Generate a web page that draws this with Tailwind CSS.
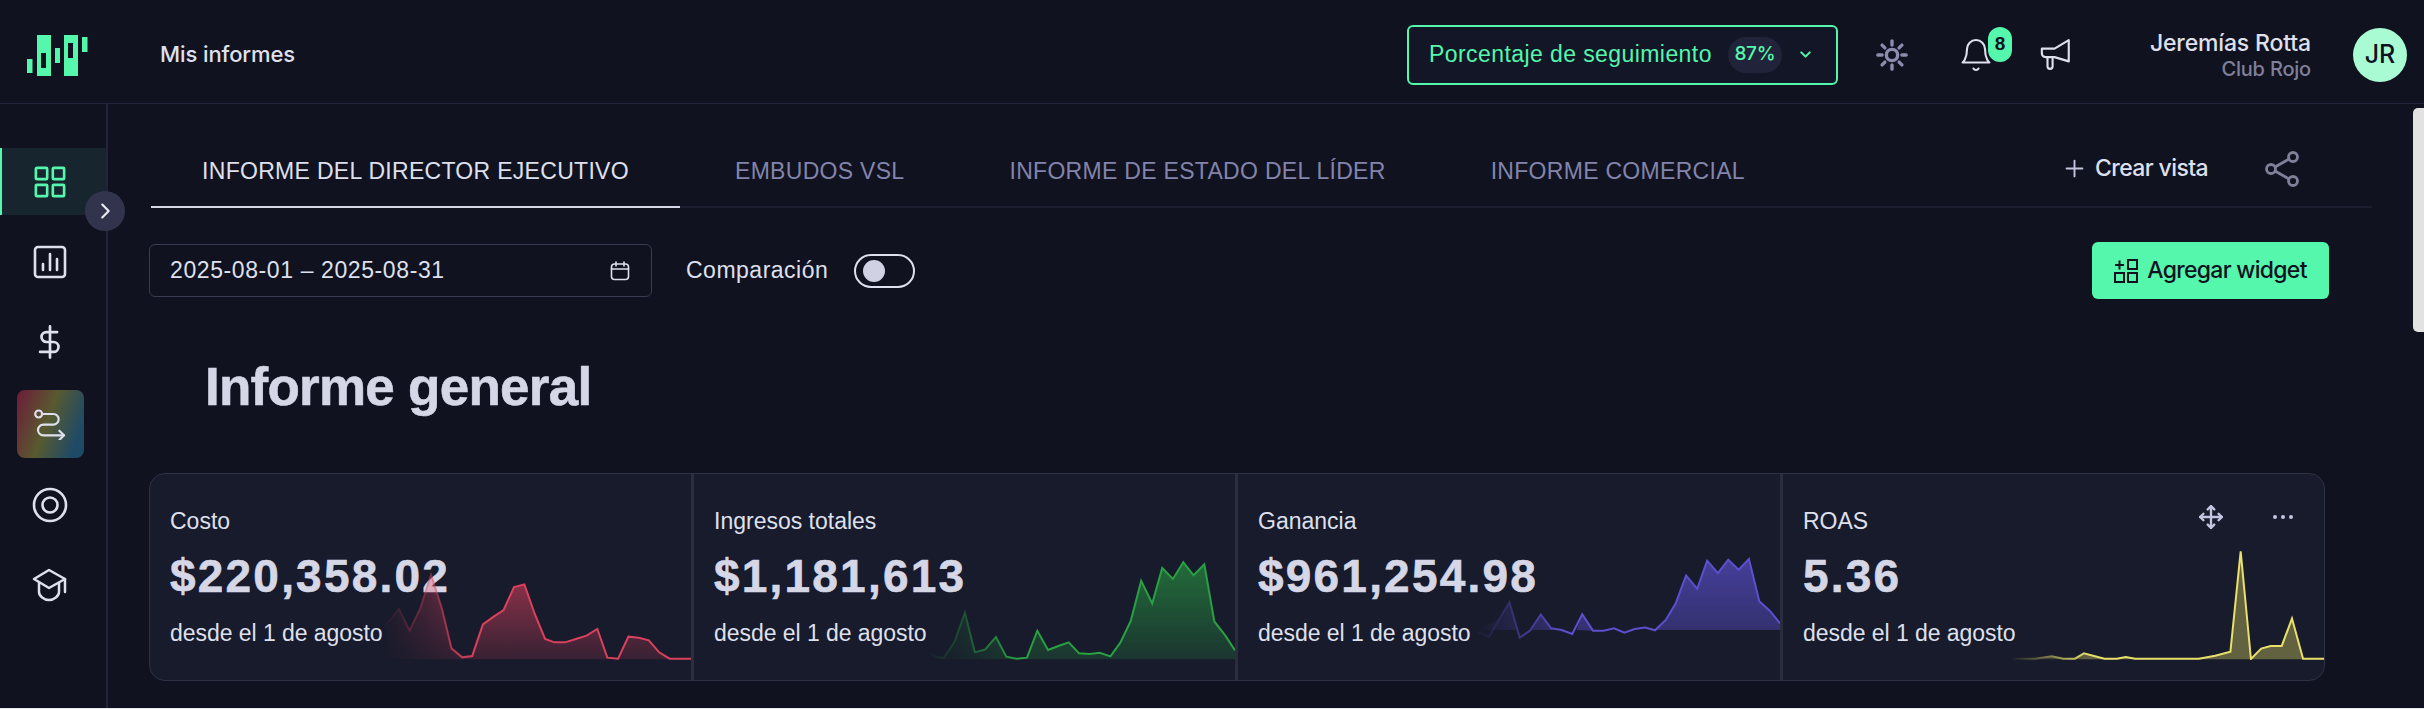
<!DOCTYPE html>
<html lang="es">

<head>
    <meta charset="UTF-8">
    <title>Mis informes</title>
    <script src="https://cdn.jsdelivr.net/npm/@tailwindcss/browser@4"></script>
</head>

<body class="w-[2424px] h-[709px] overflow-hidden relative bg-[#10121f] text-[#dfe0ee] font-['Liberation_Sans',Arial,sans-serif]">

    <!-- Top bar -->
    <header class="h-[104px] flex items-center border-b border-[#22243a] pl-[27px] pt-[6px]">
        <svg width="61" height="42" viewBox="0 0 61 42" fill="#54f7ac" class="shrink-0">
            <rect x="0" y="25" width="5.5" height="14" />
            <path fill-rule="evenodd" d="M10 1h14v41H10zM14 19v15h5V19z" />
            <rect x="28" y="14" width="5" height="15" />
            <path fill-rule="evenodd" d="M37 1h14v41H37zM41 9v15h5V9z" />
            <rect x="55" y="3" width="5.5" height="15" />
        </svg>
        <span class="ml-[72px] text-[22px] font-['Inter'] font-medium tracking-[-0.1px]">Mis informes</span>

        <div class="ml-auto flex items-center">
            <!-- Tracking chip -->
            <div class="w-[431px] h-[60px] flex items-center pl-[20px] border-2 border-[#54f7ac] rounded-[6px] bg-[#131626] text-[#54f7ac]">
                <span class="text-[23px] tracking-[0.42px] whitespace-nowrap">Porcentaje de seguimiento</span>
                <span class="ml-[16px] w-[54px] h-[36px] rounded-full bg-[#21233a] flex items-center justify-center text-[19px] font-['Inter'] font-medium tracking-[-0.3px]">87%</span>
                <svg class="ml-[15px]" width="17" height="17" viewBox="0 0 24 24" fill="none" stroke="currentColor" stroke-width="2.8" stroke-linecap="round" stroke-linejoin="round"><path d="m6 9 6 6 6-6" /></svg>
            </div>

            <!-- Theme -->
            <svg class="ml-[37px]" width="34" height="34" viewBox="0 0 24 24" fill="none" stroke="#8b8cae" stroke-width="2.4" stroke-linecap="round">
                <circle cx="12" cy="12" r="4" />
                <path d="M12 2v3M12 19v3M2 12h3M19 12h3M5 5l2 2M17 17l2 2M5 19l2-2M17 7l2-2" />
            </svg>

            <!-- Notifications -->
            <div class="relative ml-[47px] w-[40px] h-[36px] flex items-center justify-center">
                <svg width="36" height="36" viewBox="0 0 24 24" fill="none" stroke="#dfe0ee" stroke-width="1.4" stroke-linecap="round" stroke-linejoin="round">
                    <path d="M6 8a6 6 0 0 1 12 0c0 7 3 9 3 9H3s3-2 3-9" />
                    <path d="M10.3 21a1.94 1.94 0 0 0 3.4 0" />
                </svg>
                <span class="absolute left-[32px] top-[-10px] w-[24px] h-[35px] rounded-full bg-[#54f7ac] text-[#10121f] text-[19px] font-bold flex items-center justify-center">8</span>
            </div>

            <!-- Announcements -->
            <svg class="ml-[43px]" width="34" height="36" viewBox="0 0 24 24" fill="none" stroke="#dfe0ee" stroke-width="1.5" stroke-linecap="round" stroke-linejoin="round">
                <path d="M2 7.5h9L21 1.5v15l-10-3H4.5A2.5 2.5 0 0 1 2 11z" />
                <path d="M6 13.5v6.5a1.8 1.8 0 0 0 3.6 0v-6.5" />
            </svg>

            <!-- User -->
            <div class="ml-[76px] w-[162px] flex flex-col items-end">
                <span class="text-[23px] leading-[28px] font-['Inter'] font-medium tracking-[-0.15px] whitespace-nowrap">Jeremías Rotta</span>
                <span class="text-[20px] leading-[24px] text-[#7f8099] font-['Inter'] font-medium tracking-[-0.2px]">Club Rojo</span>
            </div>
            <div class="ml-[42px] mr-[17px] w-[54px] h-[54px] rounded-full bg-[#a8fbd3] text-[#10121f] text-[25px] font-['Inter'] font-medium flex items-center justify-center">JR</div>
        </div>
    </header>

    <div class="flex h-[605px]">
        <!-- Side navigation -->
        <aside class="relative w-[108px] shrink-0 border-r-2 border-[#22243a] pt-[44px] flex flex-col items-center text-[#dfe0ee]">
            <div class="w-full h-[67px] border-l-2 border-[#54f7ac] bg-[#16252e] flex items-center justify-center pr-[9px]">
                <svg width="32" height="32" viewBox="0 0 34 34" fill="none" stroke="#54f7ac" stroke-width="2.8">
                    <rect x="2" y="2" width="12" height="12" rx="1" />
                    <rect x="20" y="2" width="12" height="12" rx="1" />
                    <rect x="2" y="20" width="12" height="12" rx="1" />
                    <rect x="20" y="20" width="12" height="12" rx="1" />
                </svg>
            </div>
            <div class="h-[80px] mt-[7px] w-full flex items-center justify-center pr-[7px]">
                <svg width="34" height="34" viewBox="0 0 34 34" fill="none" stroke="currentColor" stroke-width="2.6" stroke-linecap="round">
                    <rect x="2" y="2" width="30" height="30" rx="3" />
                    <path d="M10 19v6M17 9v16M24 14v11" />
                </svg>
            </div>
            <div class="h-[80px] w-full flex items-center justify-center pr-[7px]">
                <svg width="34" height="34" viewBox="0 0 24 24" fill="none" stroke="currentColor" stroke-width="1.9" stroke-linecap="round" stroke-linejoin="round">
                    <path d="M12 1v22" />
                    <path d="M17 5H9.5a3.5 3.5 0 0 0 0 7h5a3.5 3.5 0 0 1 0 7H5" />
                </svg>
            </div>
            <div class="h-[68px] w-[67px] mt-[8px] mr-[6px] rounded-[8px] bg-[linear-gradient(110deg,#6b2238_5%,#585a2f_45%,#1f4a66_85%)] flex items-center justify-center">
                <svg width="32" height="32" viewBox="0 0 24 24" fill="none" stroke="currentColor" stroke-width="1.6" stroke-linecap="round" stroke-linejoin="round">
                    <circle cx="3.5" cy="4.5" r="2.6" />
                    <path d="M6 4.5h8.5a4 4 0 0 1 0 8H7a4 4 0 0 0 0 8h15.5" />
                    <path d="m19 17 3.5 3.5L19 24" />
                </svg>
            </div>
            <div class="h-[80px] mt-[7px] w-full flex items-center justify-center pr-[7px]">
                <svg width="36" height="36" viewBox="0 0 36 36" fill="none" stroke="currentColor" stroke-width="2.6">
                    <circle cx="18" cy="18" r="16" />
                    <circle cx="18" cy="18" r="7.5" />
                </svg>
            </div>
            <div class="h-[80px] w-full flex items-center justify-center pr-[7px]">
                <svg width="36" height="34" viewBox="0 0 36 34" fill="none" stroke="currentColor" stroke-width="2.5" stroke-linecap="round" stroke-linejoin="round">
                    <path d="M17 2 2 11l15 9 16-9z" />
                    <path d="M7 15v9c0 4 5 8 10 8s10-4 10-8v-9" />
                    <path d="M33 11v13" />
                </svg>
            </div>
            <button class="absolute left-[85px] top-[87px] w-[40px] h-[40px] rounded-full bg-[#32344e] flex items-center justify-center">
                <svg width="22" height="22" viewBox="0 0 24 24" fill="none" stroke="#e8e9f2" stroke-width="2.4" stroke-linecap="round" stroke-linejoin="round"><path d="m9 5 7 7-7 7" /></svg>
            </button>
        </aside>

        <main class="flex-1 min-w-0">
            <!-- Tabs -->
            <div class="ml-[43px] mr-[52px] pt-[33px] flex items-center border-b-2 border-[#1d1f30] text-[23px] tracking-[0.3px]">
                <button class="h-[71px] w-[529px] -mb-[2px] border-b-2 border-[#d5d7e6] text-[#dfe0ee] whitespace-nowrap">INFORME DEL DIRECTOR EJECUTIVO</button>
                <span class="ml-[55px] text-[#8284ab] whitespace-nowrap">EMBUDOS VSL</span>
                <span class="ml-[105px] text-[#8284ab] whitespace-nowrap">INFORME DE ESTADO DEL LÍDER</span>
                <span class="ml-[105px] text-[#8284ab] whitespace-nowrap">INFORME COMERCIAL</span>
                <div class="ml-auto flex items-center -mt-[6px] mr-[72px]">
                    <svg width="19" height="19" viewBox="0 0 18 18" fill="none" stroke="#c3c5e0" stroke-width="1.8" stroke-linecap="round"><path d="M9 1.5v15M1.5 9h15" /></svg>
                    <span class="ml-[11px] text-[23px] font-['Inter'] font-medium tracking-[-0.6px]">Crear vista</span>
                    <svg class="ml-[56px]" width="36" height="36" viewBox="0 0 36 36" fill="none" stroke="#7f8099" stroke-width="2.8">
                        <circle cx="7" cy="18" r="4.5" />
                        <circle cx="29" cy="6" r="4.5" />
                        <circle cx="29" cy="30" r="4.5" />
                        <path d="m11 16 14-8M11 20l14 8" />
                    </svg>
                </div>
            </div>

            <!-- Filters -->
            <div class="ml-[41px] w-[2180px] h-[57px] mt-[34px] flex items-center">
                <div class="w-[503px] h-[53px] flex items-center justify-between pl-[20px] pr-[21px] border border-[#3a3c52] rounded-[6px] text-[23px]">
                    <span class="tracking-[0.6px]">2025-08-01 – 2025-08-31</span>
                    <svg width="20" height="20" viewBox="0 0 20 20" fill="none" stroke="currentColor" stroke-width="1.6" stroke-linecap="round" stroke-linejoin="round">
                        <rect x="1.5" y="3" width="17" height="15.5" rx="3" />
                        <path d="M6 1v4M14 1v4M1.5 8h17" />
                    </svg>
                </div>
                <span class="ml-[34px] text-[23px] tracking-[0.5px]">Comparación</span>
                <div class="ml-[26px] w-[61px] h-[34px] rounded-full border-2 border-[#dfe0ee] flex items-center pl-[7px]">
                    <span class="w-[22px] h-[22px] rounded-full bg-[#d0d1e2]"></span>
                </div>
                <button class="ml-auto w-[237px] h-[57px] rounded-[6px] bg-[#54f7ac] text-[#10121f] flex items-center justify-center gap-[9px]">
                    <svg width="24" height="24" viewBox="0 0 24 24" fill="none" stroke="currentColor" stroke-width="2">
                        <path d="M1 6h9M5.5 1.5v9" />
                        <rect x="14" y="1" width="9" height="9" />
                        <rect x="1" y="14" width="9" height="9" />
                        <rect x="14" y="14" width="9" height="9" />
                    </svg>
                    <span class="text-[23px] font-['Inter'] font-medium tracking-[-0.7px] whitespace-nowrap">Agregar widget</span>
                </button>
            </div>

            <h1 class="ml-[97px] h-[174px] pt-[2px] flex items-center text-[53px] font-bold text-[#d5d7e6] tracking-[-0.75px] [-webkit-text-stroke:0.6px_#d5d7e6]">Informe general</h1>

            <!-- KPI cards -->
            <div class="ml-[41px] w-[2176px] h-[208px] grid grid-cols-[544px_544px_545px_1fr] rounded-[16px] border border-[#2f3244] bg-[#171b2b] overflow-hidden">
                <section class="relative pl-[20px] pt-[32px] border-r-[3px] border-[#2a2d3e]">
                    <p class="text-[23px] leading-[30px]">Costo</p>
                    <p class="mt-[15px] text-[46px] leading-[50px] font-bold text-[#d5d7e6] tracking-[2.2px] [-webkit-text-stroke:0.6px_#d5d7e6]">$220,358.02</p>
                    <p class="mt-[17px] text-[23px] leading-[30px] tracking-[-0.05px]">desde el 1 de agosto</p>
                    <svg class="absolute right-0 bottom-[20px]" width="310" height="90" viewBox="675 330 867 270" preserveAspectRatio="none">
                        <defs>
                            <linearGradient id="fadeRed" gradientUnits="userSpaceOnUse" x1="675" y1="0" x2="1542" y2="0"><stop offset="0" stop-color="#000" /><stop offset="0.3" stop-color="#fff" /></linearGradient>
                            <mask id="maskRed" maskUnits="userSpaceOnUse" x="675" y="300" width="867" height="300"><rect x="675" y="300" width="867" height="300" fill="url(#fadeRed)" /></mask>
                            <linearGradient id="fillRed" gradientUnits="userSpaceOnUse" x1="0" y1="340" x2="0" y2="600"><stop offset="0" stop-color="#e0425f" stop-opacity="0.62" /><stop offset="1" stop-color="#e0425f" stop-opacity="0.16" /></linearGradient>
                        </defs>
                        <g mask="url(#maskRed)">
                            <polygon fill="url(#fillRed)" points="685,598 685,500 725,447 755,512 785,445 815,345 845,445 872,565 902,592 930,588 960,493 990,470 1018,450 1047,381 1076,373 1105,462 1134,537 1160,547 1190,547 1220,537 1250,527 1280,507 1308,593 1338,596 1367,530 1396,533 1424,541 1453,577 1482,596 1542,596 1542,598" />
                            <polyline fill="none" stroke="#d9415c" stroke-width="2" vector-effect="non-scaling-stroke" points="685,500 725,447 755,512 785,445 815,345 845,445 872,565 902,592 930,588 960,493 990,470 1018,450 1047,381 1076,373 1105,462 1134,537 1160,547 1190,547 1220,537 1250,527 1280,507 1308,593 1338,596 1367,530 1396,533 1424,541 1453,577 1482,596 1542,596" />
                        </g>
                    </svg>
                </section>

                <section class="relative pl-[20px] pt-[32px] border-r-[3px] border-[#2a2d3e]">
                    <p class="text-[23px] leading-[30px]">Ingresos totales</p>
                    <p class="mt-[15px] text-[46px] leading-[50px] font-bold text-[#d5d7e6] tracking-[2.2px] [-webkit-text-stroke:0.6px_#d5d7e6]">$1,181,613</p>
                    <p class="mt-[17px] text-[23px] leading-[30px] tracking-[-0.05px]">desde el 1 de agosto</p>
                    <svg class="absolute right-0 bottom-[20px]" width="309" height="103" viewBox="660 290 866 310" preserveAspectRatio="none">
                        <defs>
                            <linearGradient id="fadeGreen" gradientUnits="userSpaceOnUse" x1="660" y1="0" x2="1526" y2="0"><stop offset="0" stop-color="#000" /><stop offset="0.3" stop-color="#fff" /></linearGradient>
                            <mask id="maskGreen" maskUnits="userSpaceOnUse" x="660" y="280" width="866" height="320"><rect x="660" y="280" width="866" height="320" fill="url(#fadeGreen)" /></mask>
                            <linearGradient id="fillGreen" gradientUnits="userSpaceOnUse" x1="0" y1="300" x2="0" y2="600"><stop offset="0" stop-color="#2aa043" stop-opacity="0.62" /><stop offset="1" stop-color="#2aa043" stop-opacity="0.2" /></linearGradient>
                        </defs>
                        <g mask="url(#maskGreen)">
                            <polygon fill="url(#fillGreen)" points="668,598 668,578 690,590 710,594 740,545 769,458 797,577 826,568 856,531 885,590 914,596 943,593 972,512 1002,570 1031,558 1060,547 1089,580 1118,582 1147,578 1177,589 1205,547 1234,482 1263,362 1294,430 1322,323 1352,356 1381,306 1410,345 1440,312 1468,484 1498,525 1526,571 1526,598" />
                            <polyline fill="none" stroke="#2aa043" stroke-width="2" vector-effect="non-scaling-stroke" points="668,578 690,590 710,594 740,545 769,458 797,577 826,568 856,531 885,590 914,596 943,593 972,512 1002,570 1031,558 1060,547 1089,580 1118,582 1147,578 1177,589 1205,547 1234,482 1263,362 1294,430 1322,323 1352,356 1381,306 1410,345 1440,312 1468,484 1498,525 1526,571" />
                        </g>
                    </svg>
                </section>

                <section class="relative pl-[20px] pt-[32px] border-r-[3px] border-[#2a2d3e]">
                    <p class="text-[23px] leading-[30px]">Ganancia</p>
                    <p class="mt-[15px] text-[46px] leading-[50px] font-bold text-[#d5d7e6] tracking-[2.2px] [-webkit-text-stroke:0.6px_#d5d7e6]">$961,254.98</p>
                    <p class="mt-[17px] text-[23px] leading-[30px] tracking-[-0.05px]">desde el 1 de agosto</p>
                    <svg class="absolute right-0 bottom-[40px]" width="307" height="87" viewBox="650 280 860 260" preserveAspectRatio="none">
                        <defs>
                            <linearGradient id="fadePurple" gradientUnits="userSpaceOnUse" x1="650" y1="0" x2="1510" y2="0"><stop offset="0" stop-color="#000" /><stop offset="0.3" stop-color="#fff" /></linearGradient>
                            <mask id="maskPurple" maskUnits="userSpaceOnUse" x="650" y="280" width="860" height="260"><rect x="650" y="280" width="860" height="260" fill="url(#fadePurple)" /></mask>
                            <linearGradient id="fillPurple" gradientUnits="userSpaceOnUse" x1="0" y1="300" x2="0" y2="510"><stop offset="0" stop-color="#5d50cf" stop-opacity="0.68" /><stop offset="1" stop-color="#5d50cf" stop-opacity="0.42" /></linearGradient>
                        </defs>
                        <g mask="url(#maskPurple)">
                            <path fill="url(#fillPurple)" d="M660 510 L723 478 752 428 773 510 Z M815 510 L840 464 869 505 898 510 Z M940 510 L956 463 986 512 Z M1160 510 L1190 480 1218 430 1247 347 1278 387 1306 303 1336 340 1365 300 1394 330 1423 298 1452 424 1482 453 1510 490 1510 510 Z" />
                            <polyline fill="none" stroke="#5d50cf" stroke-width="2" vector-effect="non-scaling-stroke" points="660,515 695,530 723,478 752,428 781,533 810,512 840,464 869,505 898,510 928,522 956,463 986,512 1016,512 1045,505 1074,518 1103,507 1132,503 1160,511 1190,480 1218,430 1247,347 1278,387 1306,303 1336,340 1365,300 1394,330 1423,298 1452,424 1482,453 1510,490" />
                        </g>
                    </svg>
                </section>

                <section class="relative pl-[20px] pt-[32px]">
                    <p class="text-[23px] leading-[30px]">ROAS</p>
                    <p class="mt-[15px] text-[46px] leading-[50px] font-bold text-[#d5d7e6] tracking-[2.2px] [-webkit-text-stroke:0.6px_#d5d7e6]">5.36</p>
                    <p class="mt-[17px] text-[23px] leading-[30px] tracking-[-0.05px]">desde el 1 de agosto</p>
                    <svg class="absolute right-0 bottom-[20px]" width="314" height="112" viewBox="560 265 765 335" preserveAspectRatio="none">
                        <defs>
                            <linearGradient id="fadeYellow" gradientUnits="userSpaceOnUse" x1="560" y1="0" x2="1325" y2="0"><stop offset="0" stop-color="#000" /><stop offset="0.25" stop-color="#fff" /></linearGradient>
                            <mask id="maskYellow" maskUnits="userSpaceOnUse" x="560" y="265" width="765" height="335"><rect x="560" y="265" width="765" height="335" fill="url(#fadeYellow)" /></mask>
                        </defs>
                        <g mask="url(#maskYellow)">
                            <polygon fill="#e8e06a" fill-opacity="0.36" points="565,598 565,596 620,596 662,589 690,596 718,596 740,580 790,596 820,596 842,591 865,596 1020,596 1060,587 1097,575 1122,275 1147,597 1172,566 1195,558 1222,558 1247,476 1274,596 1325,596 1325,598" />
                            <polyline fill="none" stroke="#e8e06a" stroke-width="2" vector-effect="non-scaling-stroke" points="565,596 620,596 662,589 690,596 718,596 740,580 790,596 820,596 842,591 865,596 1020,596 1060,587 1097,575 1122,275 1147,597 1172,566 1195,558 1222,558 1247,476 1274,596 1325,596" />
                        </g>
                    </svg>
                    <div class="absolute right-[30px] top-[30px] flex items-center gap-[48px]">
                        <svg width="26" height="26" viewBox="0 0 24 24" fill="none" stroke="#c3c5e0" stroke-width="2.2" stroke-linecap="round" stroke-linejoin="round">
                            <path d="M12 2v20M2 12h20" />
                            <path d="m9 5 3-3 3 3M9 19l3 3 3-3M5 9l-3 3 3 3M19 9l3 3-3 3" />
                        </svg>
                        <svg width="22" height="6" viewBox="0 0 22 6" fill="#c3c5e0">
                            <circle cx="3" cy="3" r="2" />
                            <circle cx="11" cy="3" r="2" />
                            <circle cx="19" cy="3" r="2" />
                        </svg>
                    </div>
                </section>
            </div>
        </main>
    </div>

    <!-- Browser scrollbar and window edge -->
    <div class="absolute right-0 top-[108px] w-[11px] h-[224px] rounded-l-[5px] bg-[#e2e2e2]"></div>
    <div class="absolute left-0 right-0 bottom-0 h-px bg-[#e8e8e8]"></div>
</body>

</html>
